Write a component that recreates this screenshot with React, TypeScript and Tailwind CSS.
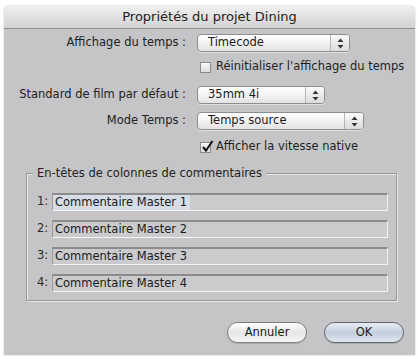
import React from "react";

const font = { fontFamily: '"DejaVu Sans", "Liberation Sans", sans-serif' };

function Arrows() {
  return (
    <svg width="7" height="11" viewBox="0 0 7 11">
      <path d="M3.5 0.5 L6.5 4 L0.5 4 Z" fill="#333" />
      <path d="M3.5 10.5 L6.5 7 L0.5 7 Z" fill="#333" />
    </svg>
  );
}

function Select({ value, width }: { value: string; width: string }) {
  return (
    <div
      className={`relative flex h-[18px] items-center rounded-[4px] border border-[#8e8e8e] bg-gradient-to-b from-[#ffffff] via-[#f3f3f3] to-[#e2e2e2] shadow-[0_1px_0_rgba(255,255,255,0.5)] ${width}`}
    >
      <span className="flex-1 pl-[10px] text-[11.5px] leading-none text-[#1a1a1a]">{value}</span>
      <div className="flex h-full w-[19px] items-center justify-center rounded-r-[3px] border-l border-[#b5b5b5] bg-gradient-to-b from-[#fafafa] to-[#dcdcdc]">
        <Arrows />
      </div>
    </div>
  );
}

function Check({ checked, label }: { checked?: boolean; label: string }) {
  return (
    <div className="flex h-[16px] items-center gap-[5px]">
      <div className="relative h-[11px] w-[11px] border border-[#8a8a8a] bg-gradient-to-b from-[#f8f8f8] to-[#dedede] shadow-[inset_0_1px_0_#fff]">
        {checked && (
          <svg className="absolute left-[0px] top-[-3px]" width="13" height="13" viewBox="0 0 13 13">
            <path d="M2 7 L5 10.5 L11.5 1" fill="none" stroke="#111" strokeWidth="2" />
          </svg>
        )}
      </div>
      <span className="text-[11.5px] leading-none text-[#1f1f1f]">{label}</span>
    </div>
  );
}

function Field({ n, text, selected }: { n: number; text: string; selected?: boolean }) {
  return (
    <div className="flex h-[18px] items-center">
      <span className="w-[15px] text-[11.5px] leading-none text-[#2a2a2a]">{n}:</span>
      <div className="flex h-[18px] flex-1 items-center border-t-2 border-l border-r border-b border-t-[#8b8b8b] border-l-[#9a9a9a] border-r-[#f4f4f4] border-b-[#f4f4f4] bg-[#cbcbcd]">
        <span
          className={`pl-[2px] pr-[3px] text-[11.5px] leading-[15px] text-[#1a1a1a] ${selected ? "bg-[#d6dde6]" : ""}`}
        >
          {text}
        </span>
      </div>
    </div>
  );
}

function Pill({ label, primary }: { label: string; primary?: boolean }) {
  return (
    <div
      className={`flex h-[21px] w-[80px] items-center justify-center rounded-full border text-[11.5px] leading-none text-[#1a1a1a] ${
        primary
          ? "border-[#5f6670] bg-gradient-to-b from-[#e9eef5] via-[#c4cedb] to-[#dfe6ee]"
          : "border-[#7d7d7d] bg-gradient-to-b from-[#ffffff] via-[#e6e6e6] to-[#f5f5f5]"
      } shadow-[0_1px_1px_rgba(0,0,0,0.15)]`}
    >
      {label}
    </div>
  );
}

export default function App() {
  return (
    <div className="h-[359px] w-[418px] bg-white pl-[4px] pt-[6px]" style={font}>
      <div className="flex h-[349px] w-[411px] flex-col overflow-hidden rounded-t-[5px] bg-[#c5c5c7] shadow-[0_0_2px_rgba(0,0,0,0.25)]">
        <div className="flex h-[23px] items-center justify-center border-b border-[#8f8f8f] bg-gradient-to-b from-[#f0f0f0] to-[#d2d2d2] text-[13px] text-[#222]">
          Propriétés du projet Dining
        </div>

        <div className="mt-[5px] flex h-[18px] items-center">
          <div className="w-[182px] text-right text-[11.5px] text-[#222]">Affichage du temps :</div>
          <div className="ml-[11px]">
            <Select value="Timecode" width="w-[153px]" />
          </div>
        </div>

        <div className="ml-[196px] mt-[7px]">
          <Check label="Réinitialiser l'affichage du temps" />
        </div>

        <div className="mt-[11px] flex h-[18px] items-center">
          <div className="w-[182px] text-right text-[11.5px] text-[#222]">Standard de film par défaut :</div>
          <div className="ml-[11px]">
            <Select value="35mm 4i" width="w-[128px]" />
          </div>
        </div>

        <div className="mt-[8px] flex h-[18px] items-center">
          <div className="w-[182px] text-right text-[11.5px] text-[#222]">Mode Temps :</div>
          <div className="ml-[11px]">
            <Select value="Temps source" width="w-[167px]" />
          </div>
        </div>

        <div className="ml-[196px] mt-[9px]">
          <Check checked label="Afficher la vitesse native" />
        </div>

        <div className="relative ml-[22px] mt-[18px] h-[128px] w-[371px] border border-[#979797] shadow-[1px_1px_0_#e8e8e8,inset_1px_1px_0_#e8e8e8]">
          <div className="absolute left-[6px] top-[-8px] bg-[#c5c5c7] px-[4px] text-[11.5px] leading-[15px] text-[#222]">
            En-têtes de colonnes de commentaires
          </div>
          <div className="flex flex-col gap-[9px] pl-[10px] pr-[8px] pt-[19px]">
            <Field n={1} text="Commentaire Master 1" selected />
            <Field n={2} text="Commentaire Master 2" />
            <Field n={3} text="Commentaire Master 3" />
            <Field n={4} text="Commentaire Master 4" />
          </div>
        </div>

        <div className="mt-[21px] flex justify-end gap-[17px] pr-[11px]">
          <Pill label="Annuler" />
          <Pill label="OK" primary />
        </div>
      </div>
    </div>
  );
}
